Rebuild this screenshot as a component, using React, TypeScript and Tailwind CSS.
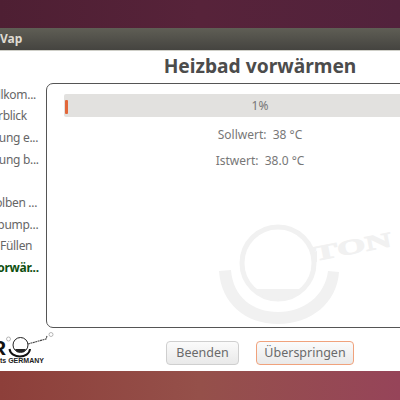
const steps = [
  { label: "Willkom...", offset: "-ml-[16px]" },
  { label: "Überblick", offset: "-ml-[24px]" },
  { label: "Einstellung e...", offset: "-ml-[39px]" },
  { label: "Einstellung b...", offset: "-ml-[39px]" },
  { label: "", offset: "" },
  { label: "Kolben ...", offset: "-ml-[12px]" },
  { label: "Vakuumpump...", offset: "-ml-[47px]" },
  { label: "Füllen", offset: "ml-0" },
];

function Watermark() {
  return (
    <svg viewBox="0 0 200 140" className="absolute left-[154px] top-[107px] w-[200px] h-[140px]">
      <circle cx="77" cy="72" r="36" fill="none" stroke="#f1f1f1" strokeWidth="5" />
      <path d="M52 98 H101 Q90 109 77 109 Q63 109 52 98 Z" fill="#f1f1f1" />
      <path d="M18 80 L30 79 C32 106 52 121 77 121 C104 121 124 104 127 80 L138 81 C136 112 110 133 77 133 C44 133 20 112 18 80 Z" fill="#f1f1f1" />
      <path d="M110 62 L116 60 L116 71 L112 72 Z" fill="#f1f1f1" />
      <text transform="translate(114 70) rotate(-11) scale(1.75 1)" fontFamily="'Liberation Serif', serif" fontWeight="700" fontSize="21" stroke="#f1f1f1" strokeWidth="0.8" fill="#f1f1f1">TON</text>
    </svg>
  );
}

function Logo() {
  return (
    <svg viewBox="0 0 60 32" className="w-[60px] h-[32px] max-w-none shrink-0">
      <text x="-9" y="23" fontFamily="'Liberation Sans', sans-serif" fontWeight="700" fontSize="21" fill="#111">R</text>
      <circle cx="8.5" cy="7" r="2" fill="none" stroke="#999" strokeWidth="0.7" />
      <circle cx="20.5" cy="13" r="7.5" fill="none" stroke="#222" strokeWidth="1" />
      <path d="M15 17 H26 L24 20 H17 Z" fill="#222" />
      <path d="M9.5 17 C11 27 29 27 30 17" fill="none" stroke="#111" strokeWidth="2" />
      <path d="M28 12 L46 7 L47 4" fill="none" stroke="#444" strokeWidth="1.1" strokeDasharray="2 0.5" />
      <circle cx="51" cy="2.5" r="2" fill="none" stroke="#999" strokeWidth="0.7" />
      <text x="0" y="31" fontFamily="'Liberation Sans', sans-serif" fontWeight="700" fontSize="7" fill="#222">ts GERMANY</text>
    </svg>
  );
}

export default function App() {
  return (
    <div className="w-[400px] h-[400px] overflow-hidden flex flex-col bg-[#8f4640] font-['Noto_Sans',sans-serif]">
      <div className="h-[28px] shrink-0 bg-gradient-to-r from-[#4e1f33] via-[#57233a] to-[#52223c]" />

      <div className="h-[23px] shrink-0 flex items-center bg-gradient-to-b from-[#5f5e55] to-[#454440] border-b border-[#cfcfc8] text-[12px] font-bold text-[#dfdbd2]">
        Vap
      </div>

      <div className="h-[320px] shrink-0 bg-white flex">
        <div className="w-[46px] shrink-0 flex flex-col">
          <div className="mt-[32.5px] flex flex-col text-[12px] tracking-[-0.3px] text-[#666] whitespace-nowrap">
            {steps.map((step, i) => (
              <div key={i} className={`h-[21.7px] leading-[21.7px] ${step.offset}`}>{step.label}</div>
            ))}
            <div className="h-[21.7px] leading-[21.7px] -ml-[10px] font-bold text-[#0f4f0f]">Vorwär...</div>
          </div>
          <div className="mt-auto mb-[7px]">
            <Logo />
          </div>
        </div>

        <div className="w-[428px] shrink-0 flex flex-col">
          <div className="h-[32px] shrink-0 flex items-center justify-center pb-[2px] text-[19.2px] font-bold text-[#4c4c4c]">
            Heizbad vorwärmen
          </div>

          <div className="relative h-[245px] shrink-0 border border-[#555] rounded-[7px] px-[17px] pt-[10px] flex flex-col items-center text-[12px] text-[#777]">
            <Watermark />
            <div className="relative w-full h-[23px] shrink-0 bg-[#e2e1df] rounded-[2px] flex items-center justify-center pt-[1px]">
              <div className="absolute left-[1px] top-[6px] w-[3px] h-[14px] rounded-[1px] bg-[#e2673a]" />
              1%
            </div>
            <div className="mt-[5px] h-[26px] leading-[26px] whitespace-pre">Sollwert:  38 °C</div>
            <div className="h-[26px] leading-[26px] whitespace-pre">Istwert:  38.0 °C</div>
          </div>

          <div className="flex-1 flex items-start justify-center gap-[17px] pt-[13px] text-[12.5px] text-[#6a6a6a]">
            <button className="w-[73px] h-[24px] rounded-[4px] border border-[#cfcfcf] bg-gradient-to-b from-[#fbfbfb] to-[#e9e9e9]">
              Beenden
            </button>
            <button className="w-[98px] h-[24px] rounded-[4px] border border-[#f0a27c] bg-gradient-to-b from-[#fbfbfb] to-[#e9e9e9]">
              Überspringen
            </button>
          </div>
        </div>
      </div>

      <div className="flex-1 bg-gradient-to-r from-[#8d3f3a] via-[#95504a] to-[#964459]" />
    </div>
  );
}
